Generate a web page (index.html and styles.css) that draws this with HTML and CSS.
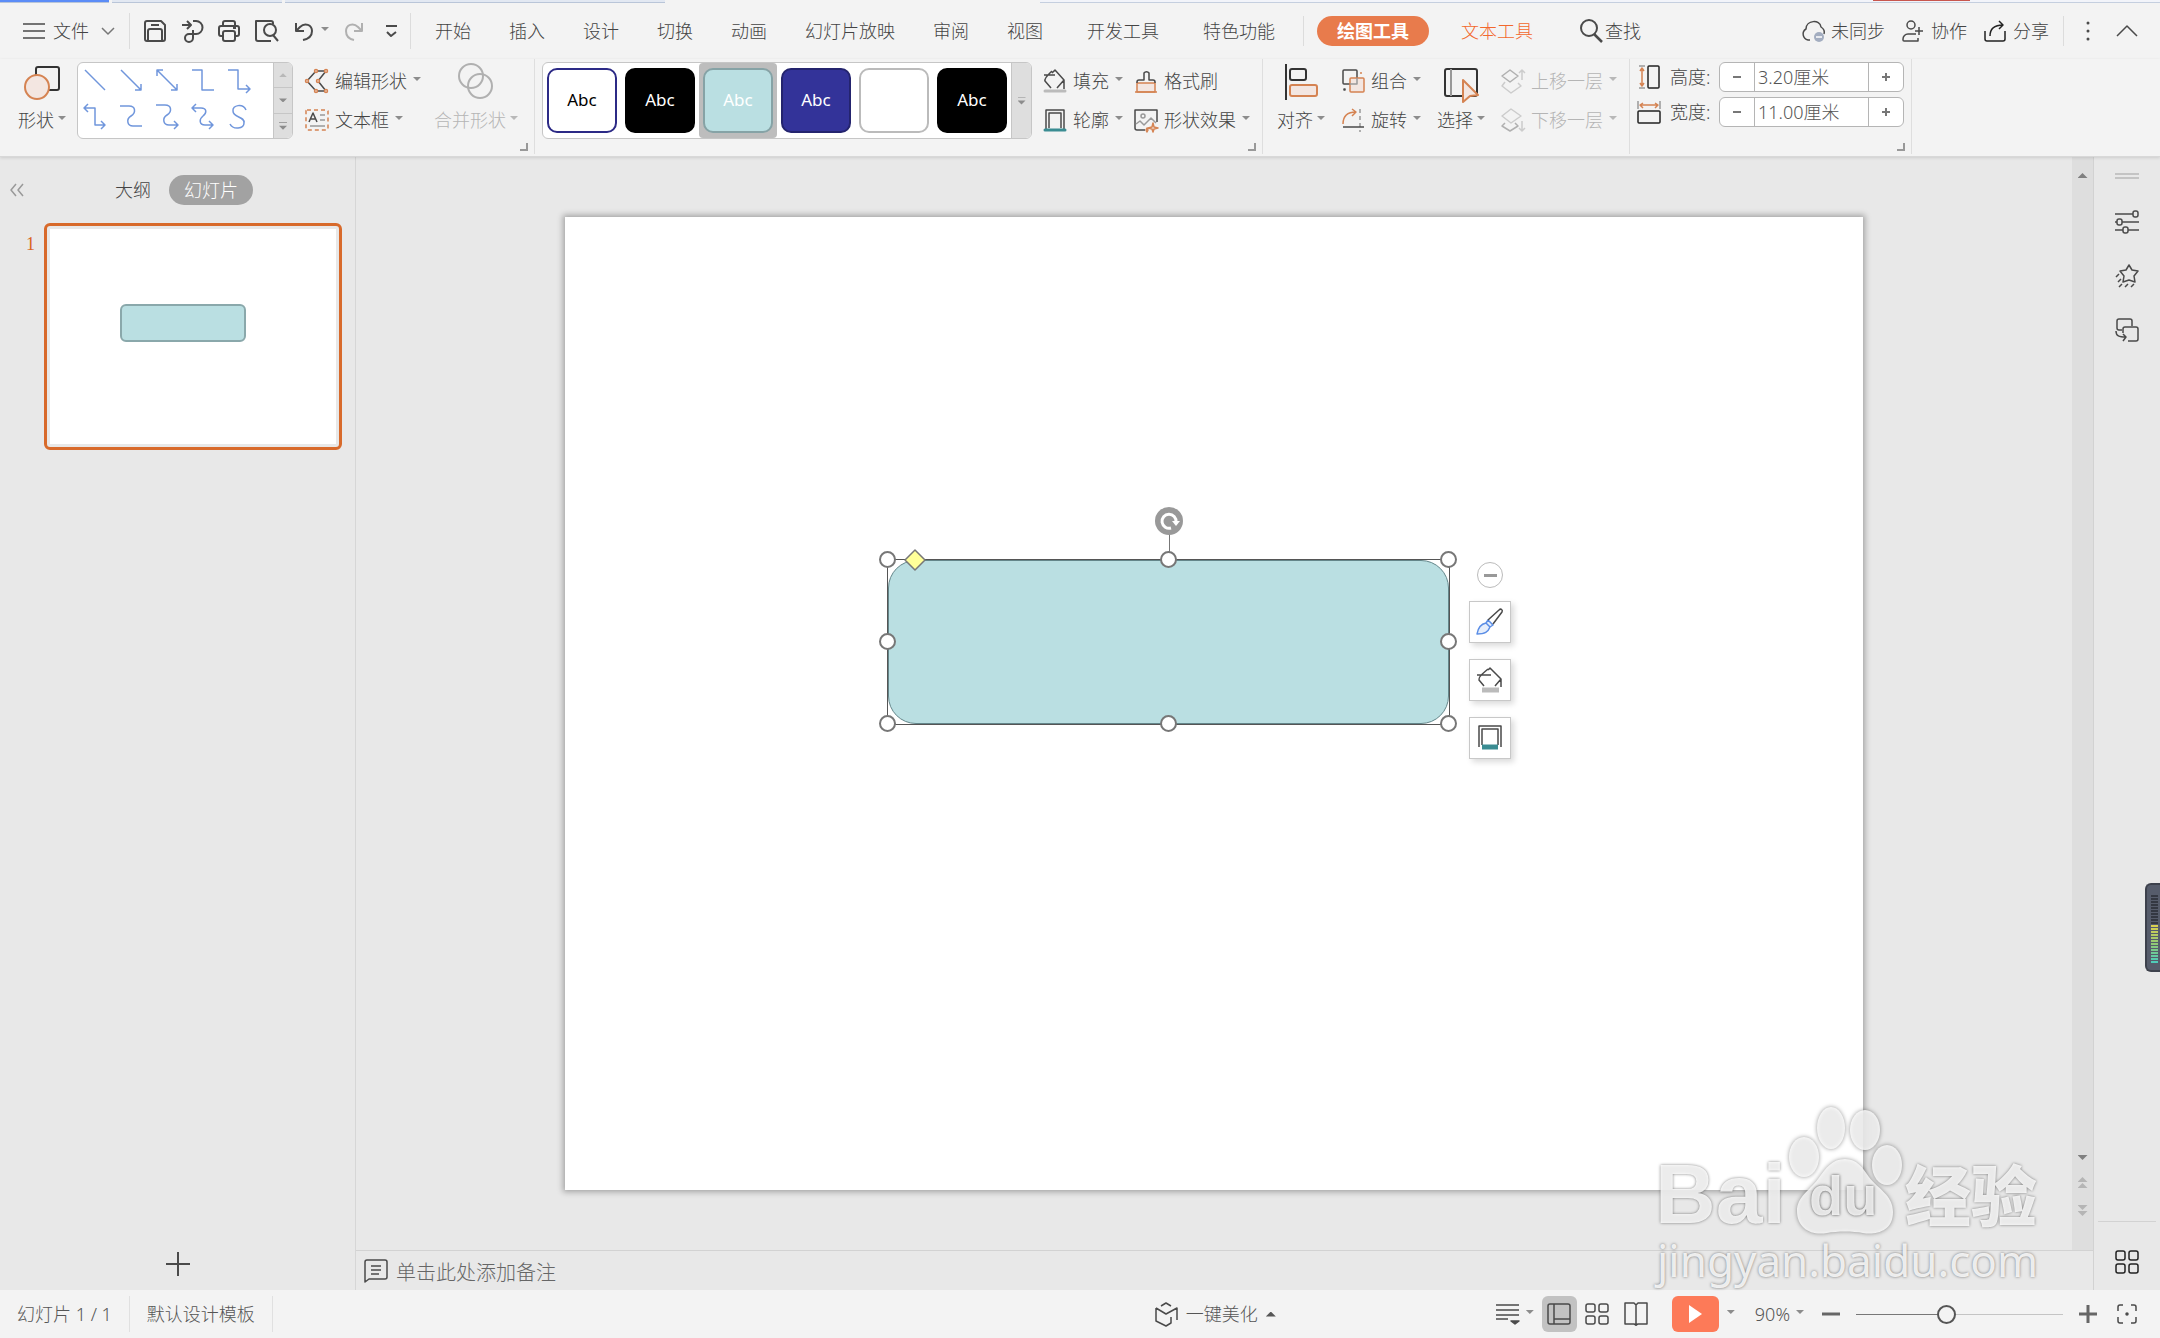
FILE: index.html
```html
<!DOCTYPE html>
<html lang="zh-CN">
<head>
    <meta charset="UTF-8">
    <meta name="viewport" content="width=device-width, initial-scale=1.0">
    <title>演示文稿</title>
    <link rel="stylesheet" href="styles.css">
</head>
<body>
    <div class="window-tabs">
        <span class="window-tab current"></span>
        <span class="window-tab"></span>
        <span class="window-tab wide"></span>
        <span class="window-space"></span>
        <span class="window-rest"><span class="login-chip"></span></span>
    </div>

    <!-- Menu bar -->
    <header class="menu-bar">
        <button class="file-menu">
            <svg class="icon" viewBox="0 0 24 24"><path d="M1 5h22M1 12h22M1 19h22"/></svg>
            文件
            <svg class="chevron" viewBox="0 0 14 10"><path d="M1 2l6 6 6-6"/></svg>
        </button>
        <span class="divider tall"></span>
        <div class="quick-tools">
            <button aria-label="保存"><svg class="icon" viewBox="0 0 24 24"><path d="M4 2h14l4 4v14a2 2 0 0 1-2 2H4a2 2 0 0 1-2-2V4a2 2 0 0 1 2-2zM5 22V12a2 2 0 0 1 2-2h10a2 2 0 0 1 2 2v10M8 6h8"/></svg></button>
            <button aria-label="输出"><svg class="icon" viewBox="0 0 24 24"><path d="M2 6h8M7 2l4 4-4 4M13 2h3a6 6 0 0 1 0 13H9a4 4 0 1 0 4 4v-8"/></svg></button>
            <button aria-label="打印"><svg class="icon" viewBox="0 0 24 24"><path d="M6 6V4a2 2 0 0 1 2-2h8a2 2 0 0 1 2 2v2M6 17H4a2 2 0 0 1-2-2V9a2 2 0 0 1 2-2h16a2 2 0 0 1 2 2v6a2 2 0 0 1-2 2h-2M8 12h8a2 2 0 0 1 2 2v6a2 2 0 0 1-2 2H8a2 2 0 0 1-2-2v-6a2 2 0 0 1 2-2zM16 9h3"/></svg></button>
            <button aria-label="打印预览"><svg class="icon" viewBox="0 0 24 24"><path d="M17 22H4a2 2 0 0 1-2-2V2h15a2 2 0 0 1 2 2v1M19 16l5 6"/><circle cx="16" cy="11" r="6"/></svg></button>
            <button aria-label="撤销"><svg class="icon" viewBox="0 0 24 24"><path d="M5 4v8h8M5 12l4-4c5-5 12-2 12 4 0 5-4 8-9 9"/></svg><span class="caret"></span></button>
            <button class="faded" aria-label="恢复"><svg class="icon" viewBox="0 0 24 24"><path d="M20 4v8h-8M20 12l-4-4C11 3 4 6 4 12c0 5 3 8 8 9"/></svg></button>
            <button aria-label="自定义"><svg class="icon" viewBox="0 0 24 24"><path d="M7 7h11M8 13l4 4 5-4"/></svg></button>
        </div>
        <span class="divider tall"></span>
        <nav class="tabs">
            <button>开始</button>
            <button>插入</button>
            <button>设计</button>
            <button>切换</button>
            <button>动画</button>
            <button>幻灯片放映</button>
            <button>审阅</button>
            <button>视图</button>
            <button class="wide-tab">开发工具</button>
            <button class="wide-tab">特色功能</button>
        </nav>
        <span class="divider"></span>
        <button class="tool-tab active">绘图工具</button>
        <button class="tool-tab">文本工具</button>
        <button class="search"><svg class="icon" viewBox="0 0 24 24"><circle cx="10" cy="9" r="8"/><path class="thick" d="M15 15l8 8"/></svg>查找</button>
        <div class="account">
            <button><svg class="icon" viewBox="0 0 24 24"><path d="M9 21H7a6 6 0 0 1-2-11C5 1 19 0 20 8c3 2 4 4 3 7"/><circle class="slate" cx="18" cy="18" r="5"/><path class="white-line" d="M15 18h6"/></svg>未同步</button>
            <button><svg class="icon" viewBox="0 0 24 24"><circle cx="10" cy="6" r="4"/><path d="M15 15H7a5 5 0 0 0-5 5v1a1 1 0 0 0 1 1h14v-3M18 8v8M14 12h8"/></svg>协作</button>
            <button><svg class="icon dark" viewBox="0 0 24 24"><path d="M2 12v8a2 2 0 0 0 2 2h16a2 2 0 0 0 2-2v-8M7 17c0-8 5-11 13-11M16 2l4 4-4 4"/></svg>分享</button>
        </div>
        <span class="divider"></span>
        <div class="window-tools">
            <button aria-label="更多"><svg class="icon" viewBox="0 0 24 24"><path class="dots" d="M12 4v0M12 12v0M12 20v0"/></svg></button>
            <button aria-label="收起功能区"><svg class="icon" viewBox="0 0 24 24"><path d="M2 17L12 7l10 10"/></svg></button>
        </div>
    </header>

    <!-- Ribbon -->
    <section class="ribbon">
        <div class="group shapes-group">
            <button class="big">
                <svg class="big-icon" viewBox="0 0 40 40"><rect x="14" y="5" width="23" height="23" rx="2"/><circle class="accent" cx="15" cy="25" r="12"/></svg>
                <span class="label">形状<span class="caret"></span></span>
            </button>
            <div class="gallery line-gallery">
                <div class="lines">
                    <svg viewBox="0 0 24 24"><path d="M2 2l20 20"/></svg>
                    <svg viewBox="0 0 24 24"><path d="M2 2l20 20M22 16v6h-6"/></svg>
                    <svg viewBox="0 0 24 24"><path d="M2 2l20 20M22 16v6h-6M2 8V2h6"/></svg>
                    <svg viewBox="0 0 24 24"><path d="M1 2h10v20h12"/></svg>
                    <svg viewBox="0 0 24 24"><path d="M1 2h10v19h12M19 17l4 4-4 4"/></svg>
                    <svg viewBox="0 0 24 24"><path d="M1 4h11v17h10M18 17l4 4-4 4M5 0L1 4l4 4"/></svg>
                    <svg viewBox="0 0 24 24"><path d="M1 2h9c7 0 7 7 2 10s-4 10 2 10h9"/></svg>
                    <svg viewBox="0 0 24 24"><path d="M1 1h9c7 0 7 7 2 10s-4 10 2 10h9M19 17l4 4-4 4"/></svg>
                    <svg viewBox="0 0 24 24"><path d="M1 4h9c6 0 6 5 2 8s-4 9 2 9h8M18 17l4 4-4 4M5 0L1 4l4 4"/></svg>
                    <svg viewBox="0 0 24 24"><path d="M19 6c-3-7-14-5-13 1 0 7 12 5 11 12 0 6-11 7-14 1"/></svg>
                </div>
                <div class="gallery-scroll">
                    <button class="faded" aria-label="上一行"><span class="caret up"></span></button>
                    <button aria-label="下一行"><span class="caret"></span></button>
                    <button aria-label="更多形状"><span class="caret bar"></span></button>
                </div>
            </div>
            <div class="stack">
                <button><svg class="icon" viewBox="0 0 24 24"><path d="M21 2H11L2 12l9 10h10l-8-10z"/><g class="accent"><circle cx="11" cy="2" r="1.5"/><circle cx="21" cy="2" r="1.5"/><circle cx="2" cy="12" r="1.5"/><circle cx="13" cy="12" r="1.5"/><circle cx="11" cy="22" r="1.5"/><circle cx="21" cy="22" r="1.5"/></g></svg>编辑形状<span class="caret"></span></button>
                <button><svg class="icon" viewBox="0 0 24 24"><rect class="accent-line dashed" x="1" y="2" width="22" height="20" rx="1"/><path d="M4 14L8 5l4 9M6 11h5"/><path class="thin" d="M15 7h5M15 12h5M5 18h15"/></svg>文本框<span class="caret"></span></button>
            </div>
            <button class="big faded merge">
                <svg class="big-icon" viewBox="0 0 40 40"><circle cx="15" cy="14" r="12"/><circle cx="24" cy="24" r="12"/></svg>
                <span class="label">合并形状<span class="caret"></span></span>
            </button>
            <span class="launcher"></span>
        </div>

        <div class="group style-group">
            <div class="gallery style-gallery">
                <button class="swatch outline"><span>Abc</span></button>
                <button class="swatch black"><span>Abc</span></button>
                <button class="swatch teal selected"><span>Abc</span></button>
                <button class="swatch navy"><span>Abc</span></button>
                <button class="swatch plain" aria-label="白色"><span></span></button>
                <button class="swatch black"><span>Abc</span></button>
                <div class="gallery-scroll">
                    <button aria-label="更多样式"><span class="caret bar"></span></button>
                </div>
            </div>
            <div class="stack">
                <button><svg class="icon" viewBox="0 0 24 24"><path d="M1 6h11M9 4l3-3 9 10v9M21 11l-7 8M8 19l-6-7c-1-3 5-8 7-10"/><path class="gray-bar" d="M2 22h20"/></svg>填充<span class="caret"></span></button>
                <button><svg class="icon" viewBox="0 0 24 24"><path d="M3 22V2h18v20M6 20V5h12v15"/><path class="teal-bar" d="M2 22h20"/></svg>轮廓<span class="caret"></span></button>
            </div>
            <div class="stack">
                <button><svg class="icon" viewBox="0 0 24 24"><rect class="accent" x="3" y="14" width="18" height="9"/><path class="accent-line" d="M1 23h22"/><path d="M3 14v-1a2 2 0 0 1 2-2h5V4a3 3 0 0 1 5 0v7h4a2 2 0 0 1 2 2v1"/></svg>格式刷</button>
                <button><svg class="icon" viewBox="0 0 24 24"><path d="M11 22H3a2 2 0 0 1-2-2V2h22v12"/><circle class="thin" cx="9" cy="8" r="2"/><path class="thin" d="M2 16l4-3 4 4 7-7 5 5"/><path class="accent" d="M19 15l1 4 4 1-4 1-1 3-1-3-4-1 4-1zM13 20l1 2-1 2-1-2z"/></svg>形状效果<span class="caret"></span></button>
            </div>
            <span class="launcher"></span>
        </div>

        <div class="group arrange-group">
            <button class="big">
                <svg class="big-icon" viewBox="0 0 40 40"><path d="M5 2v36"/><rect class="heavy" x="9" y="7" width="16" height="11" rx="2"/><rect class="accent heavy" x="9" y="23" width="27" height="11" rx="2"/></svg>
                <span class="label">对齐<span class="caret"></span></span>
            </button>
            <div class="stack">
                <button><svg class="icon" viewBox="0 0 24 24"><rect x="2" y="1" width="14" height="14" rx="1"/><rect class="accent" x="9" y="9" width="14" height="14" rx="1"/><path class="thin" d="M9 15h7V9"/><path class="accent-line" d="M19 4h2"/><path d="M3 20h1v1H3z"/></svg>组合<span class="caret"></span></button>
                <button><svg class="icon" viewBox="0 0 24 24"><path class="accent-line" d="M2 16C2 8 7 4 15 4M11 1l4 3-4 4"/><path class="thin dashed" d="M19 1v23"/><path d="M2 19h21"/></svg>旋转<span class="caret"></span></button>
            </div>
            <button class="big">
                <svg class="big-icon" viewBox="0 0 40 40"><rect x="4" y="7" width="32" height="27" rx="2"/><path class="thin" d="M10 7v27"/><path class="accent" d="M22 18l15 15-8 1-7 6z"/></svg>
                <span class="label">选择<span class="caret"></span></span>
            </button>
            <div class="stack faded">
                <button><svg class="icon" viewBox="0 0 24 24"><path d="M9 1l8 6-8 6-8-6z"/><path class="thin" d="M4 13l-3 4 9 7 10-7-3-3M21 11V1M18 4l3-3 3 3"/></svg>上移一层<span class="caret"></span></button>
                <button><svg class="icon" viewBox="0 0 24 24"><path class="thin" d="M10 1l10 7-10 7L1 8zM21 13v10M18 20l3 3 3-3"/><path d="M4 15l-3 3 8 5 8-5-3-3"/></svg>下移一层<span class="caret"></span></button>
            </div>
        </div>

        <div class="group size-group">
            <div class="size-row">
                <svg class="icon" viewBox="0 0 24 24"><rect class="dark" x="11" y="1" width="11" height="22" rx="1"/><path class="thin" d="M2 1h6M2 23h6"/><path class="accent-line" d="M5 3v18M3 6l2-3 2 3M3 18l2 3 2-3"/></svg>
                <label for="shape-height">高度:</label>
                <div class="stepper"><button aria-label="减小高度"><svg viewBox="0 0 10 10"><path d="M1 5h8"/></svg></button><input type="text" id="shape-height" value="3.20厘米"><button aria-label="增大高度"><svg viewBox="0 0 10 10"><path d="M1 5h8M5 1v8"/></svg></button></div>
            </div>
            <div class="size-row">
                <svg class="icon" viewBox="0 0 24 24"><rect class="dark" x="1" y="11" width="22" height="12" rx="1"/><path class="thin" d="M1 1v8M23 1v8"/><path class="accent-line" d="M3 5h18M6 3L3 5l3 3M18 3l3 2-3 3"/></svg>
                <label for="shape-width">宽度:</label>
                <div class="stepper"><button aria-label="减小宽度"><svg viewBox="0 0 10 10"><path d="M1 5h8"/></svg></button><input type="text" id="shape-width" value="11.00厘米"><button aria-label="增大宽度"><svg viewBox="0 0 10 10"><path d="M1 5h8M5 1v8"/></svg></button></div>
            </div>
            <span class="launcher"></span>
        </div>
    </section>

    <main class="workspace">
        <!-- Slide list -->
        <aside class="slide-panel">
            <div class="panel-head">
                <button class="collapse" aria-label="折叠"><svg viewBox="0 0 14 14"><path d="M6 1L1 7l5 6M13 1L8 7l5 6"/></svg></button>
                <button class="panel-tab">大纲</button>
                <button class="panel-tab active">幻灯片</button>
            </div>
            <div class="thumb-row">
                <span class="thumb-number">1</span>
                <div class="thumb"><div class="thumb-page"><div class="thumb-shape"></div></div></div>
            </div>
            <button class="add-slide" aria-label="新建幻灯片"><svg class="icon" viewBox="0 0 24 24"><path class="heavy" d="M0 12h24M12 0v24"/></svg></button>
        </aside>

        <div class="editor">
            <div class="canvas-row">
                <div class="stage">
                    <div class="slide">
                        <div class="selection">
                            <div class="round-shape"></div>
                            <span class="stem"></span>
                            <svg class="rotate" viewBox="0 0 28 28"><circle cx="14" cy="14" r="14"/><path d="M16 21a7 7 0 1 1 5-6"/><path class="tip" d="M17 14h8l-4 5z"/></svg>
                            <span class="handle top left"></span>
                            <span class="handle top mid"></span>
                            <span class="handle top right"></span>
                            <span class="handle center left"></span>
                            <span class="handle center right"></span>
                            <span class="handle bottom left"></span>
                            <span class="handle bottom mid"></span>
                            <span class="handle bottom right"></span>
                            <svg class="adjust" viewBox="0 0 22 22"><path d="M11 1l10 10-10 10L1 11z"/></svg>
                            <div class="float-tools">
                                <button class="minus" aria-label="收起"></button>
                                <button aria-label="形状样式"><svg class="icon" viewBox="0 0 28 28"><path class="blue" d="M1 26c1-6 4-10 9-11l4 4c-2 5-5 7-13 7zM10 15l2-3 5 5-3 2"/><path d="M12 12L23 2c2-2 4 0 3 2l-9 12"/></svg></button>
                                <button aria-label="形状填充"><svg class="icon" viewBox="0 0 28 28"><path d="M1 9h14M12 4l2-2 11 11v8M25 13l-6 7M8 20l-5-6c-1-4 6-8 9-11"/><path class="gray-bar wide-bar" d="M6 24h17"/></svg></button>
                                <button aria-label="形状轮廓"><svg class="icon" viewBox="0 0 28 28"><path d="M3 23V2h22v21M6 21V5h16v16"/><path class="teal-bar wide-bar" d="M6 23h16"/></svg></button>
                            </div>
                        </div>
                    </div>
                </div>
                <div class="scrollbar">
                    <span class="caret up dark-caret"></span>
                    <span class="scroll-space"></span>
                    <span class="caret dark-caret"></span>
                    <span class="pair"><span class="caret up"></span><span class="caret up"></span></span>
                    <span class="pair"><span class="caret"></span><span class="caret"></span></span>
                </div>
            </div>
            <div class="notes">
                <svg class="icon" viewBox="0 0 24 24"><path d="M3 1h18a2 2 0 0 1 2 2v15a2 2 0 0 1-2 2H5l-4 3V3a2 2 0 0 1 2-2zM7 7h10M7 11h10M7 15h8"/></svg>
                单击此处添加备注
            </div>
        </div>

        <aside class="side-bar">
            <span class="grip"></span>
            <button aria-label="属性"><svg class="icon" viewBox="0 0 24 24"><path d="M0 4h18M0 12h2M7 12h17M0 20h8M13 20h11"/><rect x="18" y="1" width="5" height="6" rx="2"/><rect x="2" y="9" width="5" height="6" rx="2"/><rect x="8" y="17" width="5" height="6" rx="2"/></svg></button>
            <button aria-label="动画"><svg class="icon" viewBox="0 0 24 24"><path d="M14 1l3 5 6 1-4 5 1 6-6-2-6 2 1-6-4-5 6-1zM1 13l3-3M3 18l3-3M4 23l3-3M10 23l3-3M16 23l3-3"/></svg></button>
            <button aria-label="切换"><svg class="icon" viewBox="0 0 24 24"><path d="M7 12H4a2 2 0 0 1-2-2V3a2 2 0 0 1 2-2h11a2 2 0 0 1 2 2v5M13 23h8a2 2 0 0 0 2-2V11a2 2 0 0 0-2-2H10a2 2 0 0 0-2 2v4M1 13c0 5 3 6 10 6M8 16l3 3-3 4"/></svg></button>
            <span class="side-space"></span>
            <button class="apps" aria-label="应用"><svg class="icon dark" viewBox="0 0 24 24"><rect x="1" y="1" width="9" height="9" rx="2"/><rect x="14" y="1" width="9" height="9" rx="2"/><rect x="1" y="14" width="9" height="9" rx="2"/><rect x="14" y="14" width="9" height="9" rx="2"/></svg></button>
        </aside>
    </main>

    <footer class="status-bar">
        <span class="status-item">幻灯片 1 / 1</span>
        <span class="status-item">默认设计模板</span>
        <button class="beautify"><svg class="icon" viewBox="0 0 24 24"><path d="M7 4l5-3 5 3M2 6l10 6 11-6v12M17 15v6l-5 3-10-5V6"/></svg>一键美化<span class="caret up"></span></button>
        <div class="view-tools">
            <button aria-label="备注"><svg class="icon" viewBox="0 0 24 24"><path d="M0 3h23M0 8h23M0 13h23M0 17h12"/><path class="solid" d="M15 19h8l-4 3z"/></svg><span class="caret"></span></button>
            <button class="view-active" aria-label="普通视图"><svg class="icon" viewBox="0 0 24 24"><rect x="1" y="2" width="22" height="20" rx="2"/><path d="M7 2v20M7 17h16"/></svg></button>
            <button aria-label="幻灯片浏览"><svg class="icon" viewBox="0 0 24 24"><rect x="1" y="2" width="9" height="8" rx="2"/><rect x="14" y="2" width="9" height="8" rx="2"/><rect x="1" y="14" width="9" height="8" rx="2"/><rect x="14" y="14" width="9" height="8" rx="2"/></svg></button>
            <button class="book" aria-label="阅读视图"><svg class="icon" viewBox="0 0 24 24"><path d="M12 24V3M12 3l-2-2H1v21h9l2 1 2-1h9V1h-9z"/></svg></button>
            <button class="play" aria-label="放映"><svg class="icon" viewBox="0 0 24 24"><path d="M6 3l13 9-13 9z"/></svg></button>
            <span class="caret"></span>
        </div>
        <button class="zoom-value">90%<span class="caret"></span></button>
        <button class="zoom-step" aria-label="缩小"><svg viewBox="0 0 18 18"><path d="M0 9h18"/></svg></button>
        <input class="zoom-range" type="range" min="0" max="100" value="43" aria-label="显示比例">
        <button class="zoom-step" aria-label="放大"><svg viewBox="0 0 18 18"><path d="M0 9h18M9 0v18"/></svg></button>
        <button class="fit" aria-label="适应窗口"><svg class="icon" viewBox="0 0 24 24"><path d="M3 9V5a2 2 0 0 1 2-2h3M16 3h3a2 2 0 0 1 2 2v4M21 15v4a2 2 0 0 1-2 2h-3M8 21H5a2 2 0 0 1-2-2v-4"/><circle class="solid" cx="12" cy="12" r="1"/></svg></button>
    </footer>

    <!-- Level meter docked on the window edge -->
    <div class="meter"><span class="meter-bars"></span></div>

    <div class="watermark">
        <svg class="paw" viewBox="0 0 110 132">
            <ellipse cx="15" cy="51" rx="15" ry="20"/>
            <ellipse cx="42" cy="22" rx="14" ry="21"/>
            <ellipse cx="76" cy="24" rx="15" ry="20"/>
            <ellipse cx="98" cy="59" rx="15" ry="20"/>
            <path d="M56 53c12 0 18 9 24 18 9 12 24 18 24 35 0 20-18 23-30 21-10-2-26-2-36 0C22 130 8 122 8 105c0-14 12-20 21-32 8-11 14-20 27-20z"/>
        </svg>
        <span class="mark-bai">Bai</span>
        <span class="mark-du">du</span>
        <span class="mark-cn">经验</span>
        <span class="mark-url">jingyan.baidu.com</span>
    </div>
</body>
</html>
```
FILE: styles.css
```css
* {
    box-sizing: border-box;
}

body {
    margin: 0;
    min-height: 100vh;
    display: flex;
    flex-direction: column;
    background-color: #f3f3f3;
    color: #444;
    font-family: "Noto Sans", "Noto Sans CJK SC", sans-serif;
    font-size: 18px;
    font-weight: 300;
    line-height: 30px;
    overflow: hidden;
}

button {
    display: flex;
    align-items: center;
    gap: 6px;
    padding: 0;
    border: none;
    background: none;
    color: inherit;
    font: inherit;
    white-space: nowrap;
    cursor: pointer;
}

/* icons */
svg {
    display: block;
    flex-shrink: 0;
    fill: none;
    stroke: #4a4a4a;
    stroke-width: 1.5;
    stroke-linejoin: round;
    overflow: visible;
}

.icon {
    width: 24px;
    height: 24px;
}

.chevron {
    width: 14px;
    height: 10px;
    stroke: #777;
}

.big-icon {
    width: 40px;
    height: 40px;
    stroke: #333;
}

.dark {
    stroke: #222;
}

.thick {
    stroke-width: 2.5;
}

.heavy {
    stroke-width: 2;
}

.thin {
    stroke: #999;
}

.accent {
    fill: #f3e6e1;
    stroke: #d58352;
}

.accent-line {
    stroke: #d58352;
}

.dashed {
    stroke-dasharray: 4 3;
}

.slate {
    fill: #a3adc0;
    stroke: none;
}

.white-line {
    stroke: #fff;
}

.dots {
    stroke-width: 3;
    stroke-linecap: round;
}

.solid {
    fill: #4a4a4a;
}

.blue {
    stroke: #5b8ee6;
    fill: #e6eefb;
}

.gray-bar {
    stroke: #bbb;
    stroke-width: 3;
    stroke-linecap: round;
}

.teal-bar {
    stroke: #3a8c92;
    stroke-width: 3;
    stroke-linecap: round;
}

.wide-bar {
    stroke-width: 5;
    stroke-linecap: butt;
}

.faded {
    color: #b5b5b5;
}

.faded svg {
    stroke: #b0b0b0;
}

.faded .thin {
    stroke: #ccc;
}

.caret {
    width: 8px;
    height: 4px;
    margin-bottom: 4px;
    background-color: #8c8c8c;
    clip-path: polygon(0 0, 100% 0, 50% 100%);
}

.caret.up {
    clip-path: polygon(50% 0, 100% 100%, 0 100%);
}

.caret.bar {
    height: 8px;
    clip-path: polygon(0 0, 100% 0, 100% 1px, 0 1px, 0 4px, 100% 4px, 50% 100%, 0 4px);
}

.faded .caret {
    background-color: #b8b8b8;
}

/* strip of window tabs above the menu */
.window-tabs {
    display: flex;
    height: 3px;
}

.window-tab {
    width: 170px;
    margin-right: 3px;
    background-color: #e2e8f2;
    border-bottom: 1px solid #b9c5d8;
}

.window-tab.current {
    width: 109px;
    background-color: #5b8cf7;
}

.window-tab.wide {
    width: 380px;
}

.window-space {
    width: 372px;
}

.window-rest {
    flex: 1;
    display: flex;
    justify-content: flex-end;
    background-color: #f2f4fa;
    border-bottom: 1px solid #c5cfdf;
}

.login-chip {
    width: 97px;
    height: 1px;
    margin-right: 190px;
    background-color: #c8564e;
}

/* menu bar */
.menu-bar {
    display: flex;
    align-items: center;
    height: 56px;
    padding: 0 21px 0 22px;
}

.divider {
    width: 1px;
    height: 30px;
    background-color: #dcdcdc;
}

.divider.tall {
    height: 36px;
}

.file-menu {
    gap: 7px;
    margin-right: 14px;
}

.file-menu .chevron {
    margin-left: 5px;
}

.quick-tools {
    display: flex;
    gap: 13px;
    margin: 0 7px 0 13px;
}

.quick-tools svg {
    stroke-width: 2;
}

.tabs {
    display: flex;
    gap: 38px;
    margin: 0 28px 0 24px;
}

.tabs .wide-tab {
    margin-left: 6px;
}

.tool-tab {
    height: 30px;
    padding: 0 20px;
    border-radius: 15px;
    margin-left: 12px;
    color: #f2682c;
}

.tool-tab.active {
    margin-left: 13px;
    background-color: #e87b4c;
    color: #fff;
    font-weight: bold;
}

.search {
    gap: 2px;
    margin-left: 26px;
}

.search svg {
    stroke-width: 2;
}

.account {
    display: flex;
    gap: 16px;
    margin: 0 14px 0 auto;
}

.window-tools {
    display: flex;
    gap: 15px;
    margin-left: 12px;
}

/* ribbon */
.ribbon {
    display: flex;
    height: 98px;
    border-bottom: 1px solid #d8d8d8;
    box-shadow: 0 1px 3px rgba(0, 0, 0, 0.12);
    z-index: 1;
}

.group {
    position: relative;
    display: flex;
    align-items: flex-start;
    height: 95px;
    border-right: 1px solid #dedede;
}

.launcher {
    position: absolute;
    right: 6px;
    bottom: 3px;
    width: 8px;
    height: 8px;
    border-right: 2px solid #999;
    border-bottom: 2px solid #999;
}

.shapes-group {
    padding: 3px 16px 0 18px;
}

.style-group {
    gap: 11px;
    padding: 3px 12px 0 7px;
}

.arrange-group {
    gap: 16px;
    padding: 3px 12px 0 14px;
}

.size-group {
    flex-direction: column;
    gap: 5px;
    padding: 3px 7px 0 7px;
}

.big {
    flex-direction: column;
    gap: 3px;
}

.big-icon {
    stroke-width: 2;
}

.label {
    display: flex;
    align-items: center;
    gap: 4px;
}

.merge {
    margin-left: 13px;
}

.stack {
    display: flex;
    flex-direction: column;
    gap: 9px;
    padding-top: 4px;
}

.gallery {
    display: flex;
    height: 77px;
    background-color: #fff;
    border: 1px solid #c6c6c6;
    border-radius: 6px;
    overflow: hidden;
}

.line-gallery {
    width: 216px;
    margin: 0 12px 0 11px;
}

.lines {
    flex: 1;
    display: grid;
    grid-template-columns: repeat(5, 24px);
    align-content: start;
    gap: 12px;
    padding: 5px;
}

.lines svg {
    width: 24px;
    height: 24px;
    stroke: #7096dc;
}

.gallery-scroll {
    width: 19px;
    display: flex;
    flex-direction: column;
    background-color: #dedede;
    border-left: 1px solid #c6c6c6;
}

.gallery-scroll button {
    flex: 1;
    justify-content: center;
}

.gallery-scroll button + button {
    border-top: 1px solid #c6c6c6;
}

.gallery-scroll .caret {
    margin: 0;
}

.swatch {
    flex: 0 0 78px;
    height: 75px;
    padding: 0 4px;
}

.swatch span {
    flex: 1;
    height: 65px;
    border: 2px solid #000;
    border-radius: 10px;
    color: #fff;
    font-size: 17px;
    font-weight: 400;
    line-height: 60px;
}

.swatch.selected {
    background-color: #bdbdbd;
    border-radius: 4px;
}

.swatch.outline span {
    border-color: #2c2a86;
    color: #000;
}

.swatch.black span {
    background-color: #000;
}

.swatch.teal span {
    background-color: #badfe2;
    border-color: #86a3a6;
}

.swatch.navy span {
    background-color: #333399;
    border-color: #24246e;
}

.swatch.plain span {
    border-color: #bbb;
}

.style-gallery .gallery-scroll {
    width: 20px;
}

.size-row {
    display: flex;
    align-items: center;
    gap: 9px;
    height: 30px;
}

.size-row label {
    width: 40px;
    white-space: nowrap;
}

.stepper {
    display: flex;
    width: 185px;
    height: 30px;
    border: 1px solid #b5b5b5;
    border-radius: 6px;
    background-color: #fff;
}

.stepper button {
    width: 34px;
    justify-content: center;
}

.stepper svg {
    width: 10px;
    height: 10px;
    stroke: #777;
    stroke-width: 2;
}

.stepper input {
    flex: 1;
    min-width: 0;
    padding: 0 3px;
    border: solid #b5b5b5;
    border-width: 0 1px;
    background: none;
    color: #555;
    font: inherit;
}

/* workspace */
.workspace {
    flex: 1;
    display: flex;
    min-height: 0;
    background-color: #e8e8e8;
}

.slide-panel {
    width: 356px;
    display: flex;
    flex-direction: column;
    padding-bottom: 14px;
    border-right: 1px solid #d6d6d6;
}

.panel-head {
    display: flex;
    align-items: center;
    padding: 18px 0 18px 10px;
}

.collapse {
    margin-right: 91px;
}

.collapse svg {
    width: 14px;
    height: 14px;
    stroke: #999;
}

.panel-tab {
    height: 30px;
}

.panel-tab.active {
    margin-left: 18px;
    padding: 0 15px;
    border-radius: 15px;
    background-color: #a2a2a2;
    color: #fff;
}

.thumb-row {
    display: flex;
    gap: 8px;
    padding: 0 13px 0 26px;
}

.thumb-number {
    width: 10px;
    padding-top: 6px;
    color: #d9651f;
    font-family: "Liberation Serif", serif;
    font-weight: 400;
}

.thumb {
    flex: 1;
    padding: 3px;
    border: 3px solid #d86a2b;
    border-radius: 6px;
}

.thumb-page {
    position: relative;
    aspect-ratio: 4 / 3;
    background-color: #fff;
}

.thumb-shape {
    position: absolute;
    left: 24.5%;
    top: 35%;
    width: 44%;
    height: 17.5%;
    border: 2px solid #8aa8ab;
    border-radius: 6px;
    background-color: #badfe2;
}

.add-slide {
    align-self: center;
    margin-top: auto;
}

.editor {
    flex: 1;
    display: flex;
    flex-direction: column;
    min-width: 0;
}

.canvas-row {
    flex: 1;
    display: flex;
    min-height: 0;
}

.stage {
    flex: 1;
    display: flex;
    justify-content: center;
    padding: 60px 0;
}

.slide {
    position: relative;
    height: 100%;
    aspect-ratio: 4 / 3;
    background-color: #fff;
    box-shadow: 0 0 6px 2px rgba(0, 0, 0, 0.3);
}

.selection {
    position: absolute;
    left: 24.8%;
    top: 35.2%;
    width: 43.4%;
    height: 17%;
    border: 1px solid #555;
}

.round-shape {
    height: 100%;
    border: 1px solid #64868a;
    border-radius: 28px;
    background-color: #badfe2;
}

.handle {
    position: absolute;
    width: 17px;
    height: 17px;
    margin: -9px;
    border: 2px solid #777;
    border-radius: 50%;
    background-color: #fff;
}

.handle.top { top: 0; }
.handle.center { top: 50%; }
.handle.bottom { top: 100%; }
.handle.left { left: 0; }
.handle.mid { left: 50%; }
.handle.right { left: 100%; }

.stem {
    position: absolute;
    left: 50%;
    bottom: 100%;
    width: 1px;
    height: 26px;
    background-color: #777;
}

.rotate {
    position: absolute;
    left: 50%;
    top: -53px;
    width: 28px;
    height: 28px;
    margin-left: -14px;
    fill: #999;
    stroke: none;
}

.rotate path {
    fill: none;
    stroke: #fff;
    stroke-width: 3;
}

.rotate .tip {
    fill: #fff;
    stroke: none;
}

.adjust {
    position: absolute;
    left: 16px;
    top: -11px;
    width: 22px;
    height: 22px;
    fill: #ffff99;
    stroke: #777;
}

.float-tools {
    position: absolute;
    left: 100%;
    top: 2px;
    display: flex;
    flex-direction: column;
    align-items: center;
    gap: 16px;
    margin-left: 20px;
}

.float-tools button {
    width: 42px;
    height: 42px;
    justify-content: center;
    background-color: #fff;
    border: 1px solid #c8c8c8;
    box-shadow: 3px 3px 6px rgba(0, 0, 0, 0.15);
}

.float-tools .icon {
    width: 28px;
    height: 28px;
}

.float-tools .minus {
    width: 26px;
    height: 26px;
    margin-bottom: -3px;
    border: 1px solid #bbb;
    border-radius: 50%;
    box-shadow: none;
}

.minus::before {
    content: "";
    width: 13px;
    height: 3px;
    background-color: #999;
}

.scrollbar {
    width: 22px;
    display: flex;
    flex-direction: column;
    align-items: center;
    padding: 16px 0 34px;
    background-color: #dedede;
    border-right: 1px solid #d2d2d2;
}

.scrollbar .caret {
    width: 10px;
    height: 5px;
    margin: 0;
    background-color: #b5b5b5;
}

.scrollbar .dark-caret {
    background-color: #808080;
}

.scroll-space {
    flex: 1;
}

.pair {
    display: flex;
    flex-direction: column;
    gap: 1px;
    margin-top: 17px;
}

.notes {
    display: flex;
    align-items: center;
    gap: 8px;
    height: 40px;
    padding: 4px 0 0 8px;
    border-top: 1px solid #d2d2d2;
    border-right: 1px solid #d2d2d2;
    font-size: 20px;
    color: #666;
}

.notes .icon {
    margin-bottom: 3px;
}

.side-bar {
    width: 66px;
    display: flex;
    flex-direction: column;
    align-items: center;
    gap: 30px;
    padding-top: 16px;
}

.grip {
    width: 24px;
    height: 6px;
    border: solid #c4c4c4;
    border-width: 2px 0;
    margin-bottom: 1px;
}

.side-space {
    flex: 1;
}

.apps {
    width: 58px;
    height: 69px;
    padding-top: 12px;
    justify-content: center;
    border-top: 1px solid #d2d2d2;
}

/* status bar */
.status-bar {
    display: flex;
    align-items: center;
    height: 48px;
    padding-right: 21px;
    color: #555;
}

.status-item {
    height: 36px;
    padding: 0 17px;
    border-right: 1px solid #e0e0e0;
    line-height: 36px;
}

.beautify {
    gap: 8px;
    margin: 0 220px 0 auto;
}

.beautify .caret {
    width: 10px;
    height: 5px;
    margin: 0;
    background-color: #555;
}

.view-tools {
    display: flex;
    align-items: center;
    gap: 8px;
    margin-right: 20px;
}

.view-active {
    width: 35px;
    height: 36px;
    justify-content: center;
    border-radius: 6px;
    background-color: #c2c2c2;
}

.book {
    margin: 0 16px 0 7px;
}

.play {
    width: 47px;
    height: 36px;
    justify-content: center;
    border-radius: 6px;
    background-color: #fd7a58;
}

.play svg {
    fill: #fff;
    stroke: none;
}

.zoom-step svg {
    width: 18px;
    height: 18px;
    stroke: #666;
    stroke-width: 3;
}

.zoom-value {
    margin-right: 18px;
}

.zoom-range {
    appearance: none;
    width: 207px;
    height: 22px;
    margin: 0 16px;
    background: linear-gradient(90deg, #777 43%, #c4c4c4 43%) center / 100% 1px no-repeat;
}

.zoom-range::-webkit-slider-thumb {
    appearance: none;
    width: 19px;
    height: 19px;
    border: 2px solid #555;
    border-radius: 50%;
    background-color: #f3f3f3;
}

.fit {
    margin-left: 18px;
}

/* overlays */
.meter {
    position: absolute;
    right: 0;
    top: 883px;
    width: 15px;
    height: 89px;
    padding: 10px 2px 10px 4px;
    border: 2px solid #3d414c;
    border-right: none;
    border-radius: 6px 0 0 6px;
    background-color: #565c6b;
}

.meter-bars {
    display: block;
    height: 69px;
    background:
        repeating-linear-gradient(transparent 0 2px, #565c6b 2px 3px),
        linear-gradient(#343842 30px, #dcd04e 30px, #8cc878 50px, #48ccc0);
}

.watermark {
    position: absolute;
    right: 117px;
    bottom: 28px;
    width: 390px;
    height: 204px;
    color: rgba(255, 255, 255, 0.85);
    text-shadow: 0 0 3px rgba(0, 0, 0, 0.5);
    pointer-events: none;
}

.watermark span {
    position: absolute;
    line-height: 1;
    white-space: nowrap;
}

.paw {
    position: absolute;
    left: 136px;
    top: 0;
    width: 110px;
    height: 132px;
    fill: rgba(255, 255, 255, 0.8);
    stroke: none;
    filter: drop-shadow(0 0 2px rgba(0, 0, 0, 0.5));
}

.mark-bai {
    left: 2px;
    top: 46px;
    font-family: "Liberation Sans", sans-serif;
    font-size: 84px;
    font-weight: bold;
}

.mark-du {
    left: 156px;
    top: 62px;
    font-family: "Liberation Sans", sans-serif;
    font-size: 56px;
    font-weight: bold;
    text-shadow: 0 0 3px rgba(0, 0, 0, 0.7);
}

.mark-cn {
    left: 252px;
    top: 56px;
    font-size: 66px;
    font-weight: 900;
}

.mark-url {
    left: 4px;
    top: 132px;
    font-size: 44px;
    font-weight: 400;
}
```
